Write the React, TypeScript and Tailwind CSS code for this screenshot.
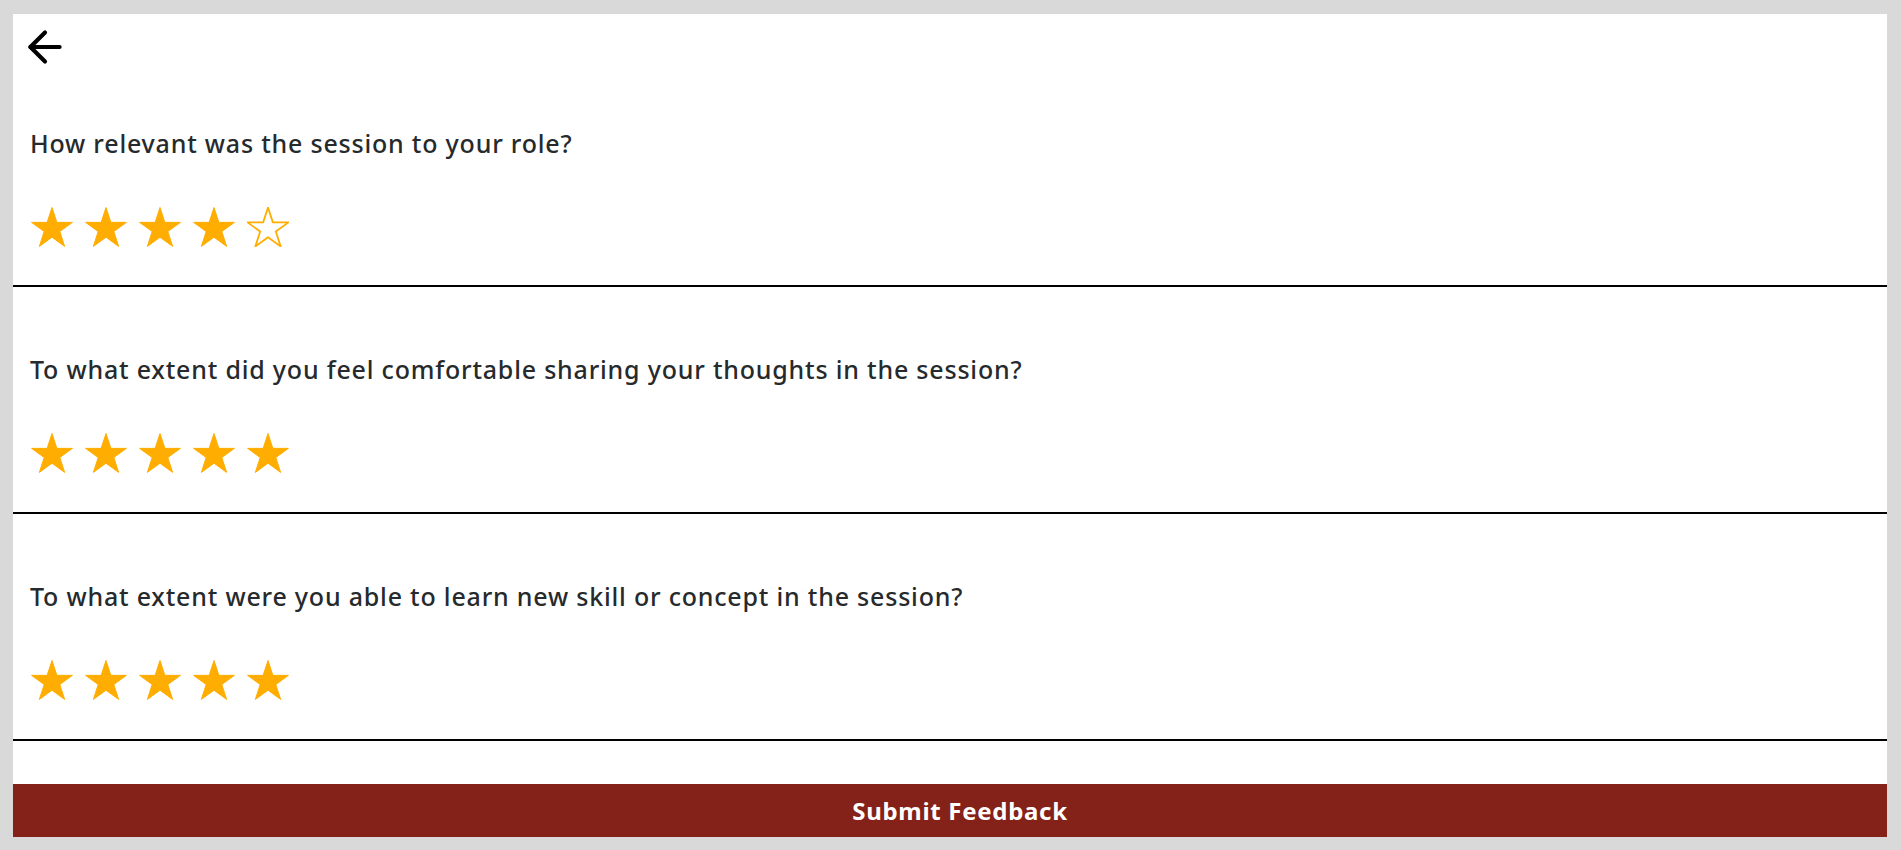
import { ArrowLeft } from 'lucide-react';

const STAR_POINTS =
  '21,0.5 25.83,15.36 41.45,15.36 28.81,24.54 33.64,39.39 21,30.21 8.36,39.39 13.19,24.54 0.55,15.36 16.17,15.36';

const questions = [
  { text: 'How relevant was the session to your role?', rating: 4 },
  { text: 'To what extent did you feel comfortable sharing your thoughts in the session?', rating: 5 },
  { text: 'To what extent were you able to learn new skill or concept in the session?', rating: 5 },
];

function Star({ filled }: { filled: boolean }) {
  return (
    <svg width="42" height="40" viewBox="0 0 42 40" className="block shrink-0">
      <polygon
        points={STAR_POINTS}
        fill={filled ? '#ffad00' : '#ffffff'}
        stroke="#ffad00"
        strokeWidth={filled ? 1 : 1.8}
        strokeLinejoin="round"
      />
    </svg>
  );
}

export default function App() {
  return (
    <div
      className="h-screen w-full bg-[#d9d9d9] pt-[14px] pl-[13px] pr-[14px] pb-[13px]"
      style={{ fontFamily: '"Noto Sans", "Open Sans", sans-serif' }}
    >
      <div className="flex h-full flex-col bg-white">
        <div className="flex-1 overflow-hidden">
          <div className="h-[58px] pl-[7px] pt-[8px]">
            <button className="block text-black">
              <ArrowLeft size={50} strokeWidth={2} />
            </button>
          </div>

          {questions.map((q, i) => (
            <div
              key={i}
              className={
                i === 0
                  ? 'border-b-2 border-black pt-[55px] pb-[38px]'
                  : 'border-b-2 border-black pt-[66px] pb-[39px]'
              }
            >
              <p className="pl-[17px] text-[25px] font-medium leading-[32px] tracking-[0.8px] text-[#262a2c]">
                {q.text}
              </p>
              <div className="mt-[48px] flex gap-[12px] pl-[18px]">
                {[1, 2, 3, 4, 5].map((n) => (
                  <Star key={n} filled={n <= q.rating} />
                ))}
              </div>
            </div>
          ))}
        </div>

        <button className="flex h-[53px] w-full shrink-0 items-center justify-center bg-[#842119] pl-[20px] text-[24px] font-bold tracking-[0.7px] text-white">
          Submit Feedback
        </button>
      </div>
    </div>
  );
}
